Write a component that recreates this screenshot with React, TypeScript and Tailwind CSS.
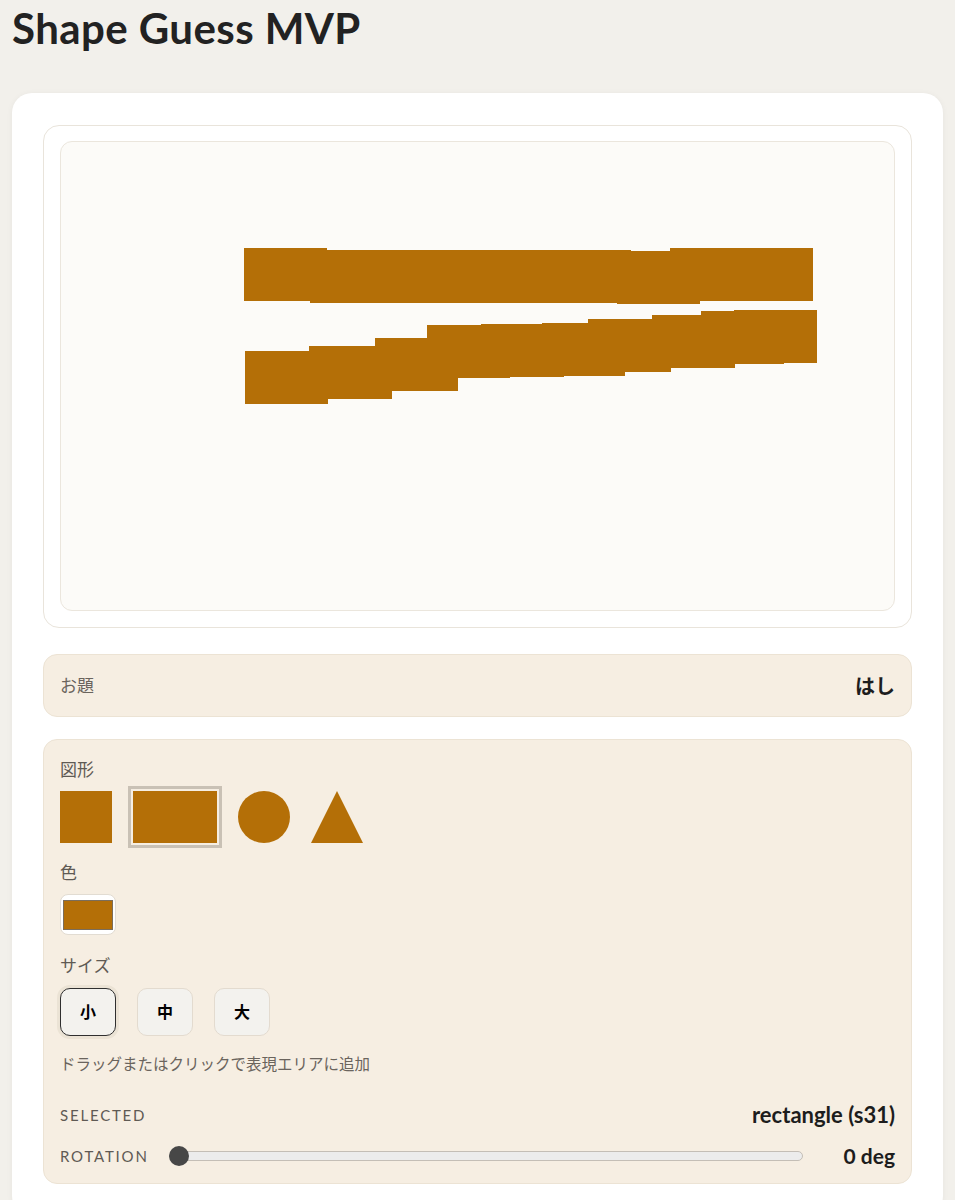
import React from "react";

const SHAPE = "#b46f07";

// canvas pieces, page coords of each piece (w 83, h 53)
const PIECES: [number, number][] = [
  [244, 248], [310, 250], [390, 250], [470, 250], [548, 250], [617, 251], [670, 248], [730, 248],
  [245, 351], [309, 346], [375, 338], [427, 325], [481, 324], [542, 323], [588, 319], [652, 315],
  [701, 311], [734, 310],
];

function Label({ children }: { children: React.ReactNode }) {
  return <div className="text-[17px] leading-5 text-[#5f5a54]">{children}</div>;
}

export default function App() {
  return (
    <div
      className="min-h-[1200px] bg-[#f2f0eb] px-3 pb-10 text-[#222]"
      style={{ fontFamily: "Lato, 'Noto Sans CJK JP', sans-serif" }}
    >
      <h1 className="pt-[2px] text-[42px] leading-[52px] font-bold tracking-[0.01em] text-[#222]">
        Shape Guess MVP
      </h1>

      <div className="mt-[39px] rounded-[20px] bg-white px-[31px] pt-8 pb-8 shadow-[0_1px_6px_rgba(0,0,0,0.05)]">
        {/* canvas */}
        <div className="rounded-2xl border border-[#e9e4db] bg-white px-4 pt-[15px] pb-4">
          <div className="relative h-[470px] overflow-hidden rounded-xl border border-[#ebe6dd] bg-[#fcfbf8]">
            {PIECES.map(([x, y], i) => (
              <div
                key={i}
                className="absolute h-[53px] w-[83px]"
                style={{ left: x - 61, top: y - 142, backgroundColor: SHAPE }}
              />
            ))}
          </div>
        </div>

        {/* prompt */}
        <div className="mt-[26px] flex h-[63px] items-center justify-between rounded-[14px] border border-[#ece3d4] bg-[#f6eee2] px-4">
          <span className="text-[17px] text-[#6a645d]">お題</span>
          <span className="text-[20px] font-bold text-[#1d1d1d]">はし</span>
        </div>

        {/* controls */}
        <div className="mt-[22px] rounded-[14px] border border-[#ece3d4] bg-[#f6eee2] px-4 pt-[20px] pb-[13px]">
          <Label>図形</Label>
          <div className="mt-[11px] flex items-center gap-[21px]">
            <div className="h-[52px] w-[52px]" style={{ backgroundColor: SHAPE }} />
            <div className="h-[52px] w-[84px] outline-[3px] outline-offset-2 outline-[#c9c1b5] outline-solid" style={{ backgroundColor: SHAPE }} />
            <div className="h-[52px] w-[52px] rounded-full" style={{ backgroundColor: SHAPE }} />
            <svg width="52" height="52" viewBox="0 0 52 52">
              <polygon points="26,0 52,52 0,52" fill={SHAPE} />
            </svg>
          </div>

          <div className="mt-[20px]">
            <Label>色</Label>
          </div>
          <div className="mt-[11px] flex">
            <div className="flex h-[41px] w-[56px] items-center justify-center rounded-lg border border-[#e2dcd2] bg-white">
              <div className="h-[30px] w-[50px] border border-[#7b6d5b]" style={{ backgroundColor: SHAPE }} />
            </div>
          </div>

          <div className="mt-[21px]">
            <Label>サイズ</Label>
          </div>
          <div className="mt-[12px] flex gap-[21px]">
            <button className="flex h-[48px] w-[56px] items-center justify-center rounded-[10px] border-[1.5px] border-[#2f2f2f] bg-[#f3f2ee] text-[16px] font-bold text-black shadow-[0_0_0_3px_rgba(120,100,70,0.08)]">
              小
            </button>
            <button className="flex h-[48px] w-[56px] items-center justify-center rounded-[10px] border border-[#e3dbcf] bg-[#f3f2ee] text-[16px] font-bold text-black">
              中
            </button>
            <button className="flex h-[48px] w-[56px] items-center justify-center rounded-[10px] border border-[#e3dbcf] bg-[#f3f2ee] text-[16px] font-bold text-black">
              大
            </button>
          </div>

          <div className="mt-[17px] text-[15.5px] text-[#6a645d]">ドラッグまたはクリックで表現エリアに追加</div>

          <div className="mt-[25px] flex items-center justify-between">
            <span className="text-[15px] tracking-[0.12em] text-[#5f5a54]">SELECTED</span>
            <span className="text-[22px] leading-7 font-bold text-[#1d1d1d]">rectangle (s31)</span>
          </div>

          <div className="mt-[13px] flex items-center">
            <span className="text-[15px] tracking-[0.12em] text-[#5f5a54]">ROTATION</span>
            <div className="relative ml-5 h-5 flex-1">
              <div className="absolute inset-x-0 top-1/2 h-[10px] -translate-y-1/2 rounded-full border border-[#c4beb6] bg-[#ececec]" />
              <div className="absolute left-0 top-0 h-5 w-5 rounded-full bg-[#474747]" />
            </div>
            <span className="ml-10 text-[21px] leading-7 font-bold text-[#1d1d1d]">0 deg</span>
          </div>
        </div>
      </div>
    </div>
  );
}
